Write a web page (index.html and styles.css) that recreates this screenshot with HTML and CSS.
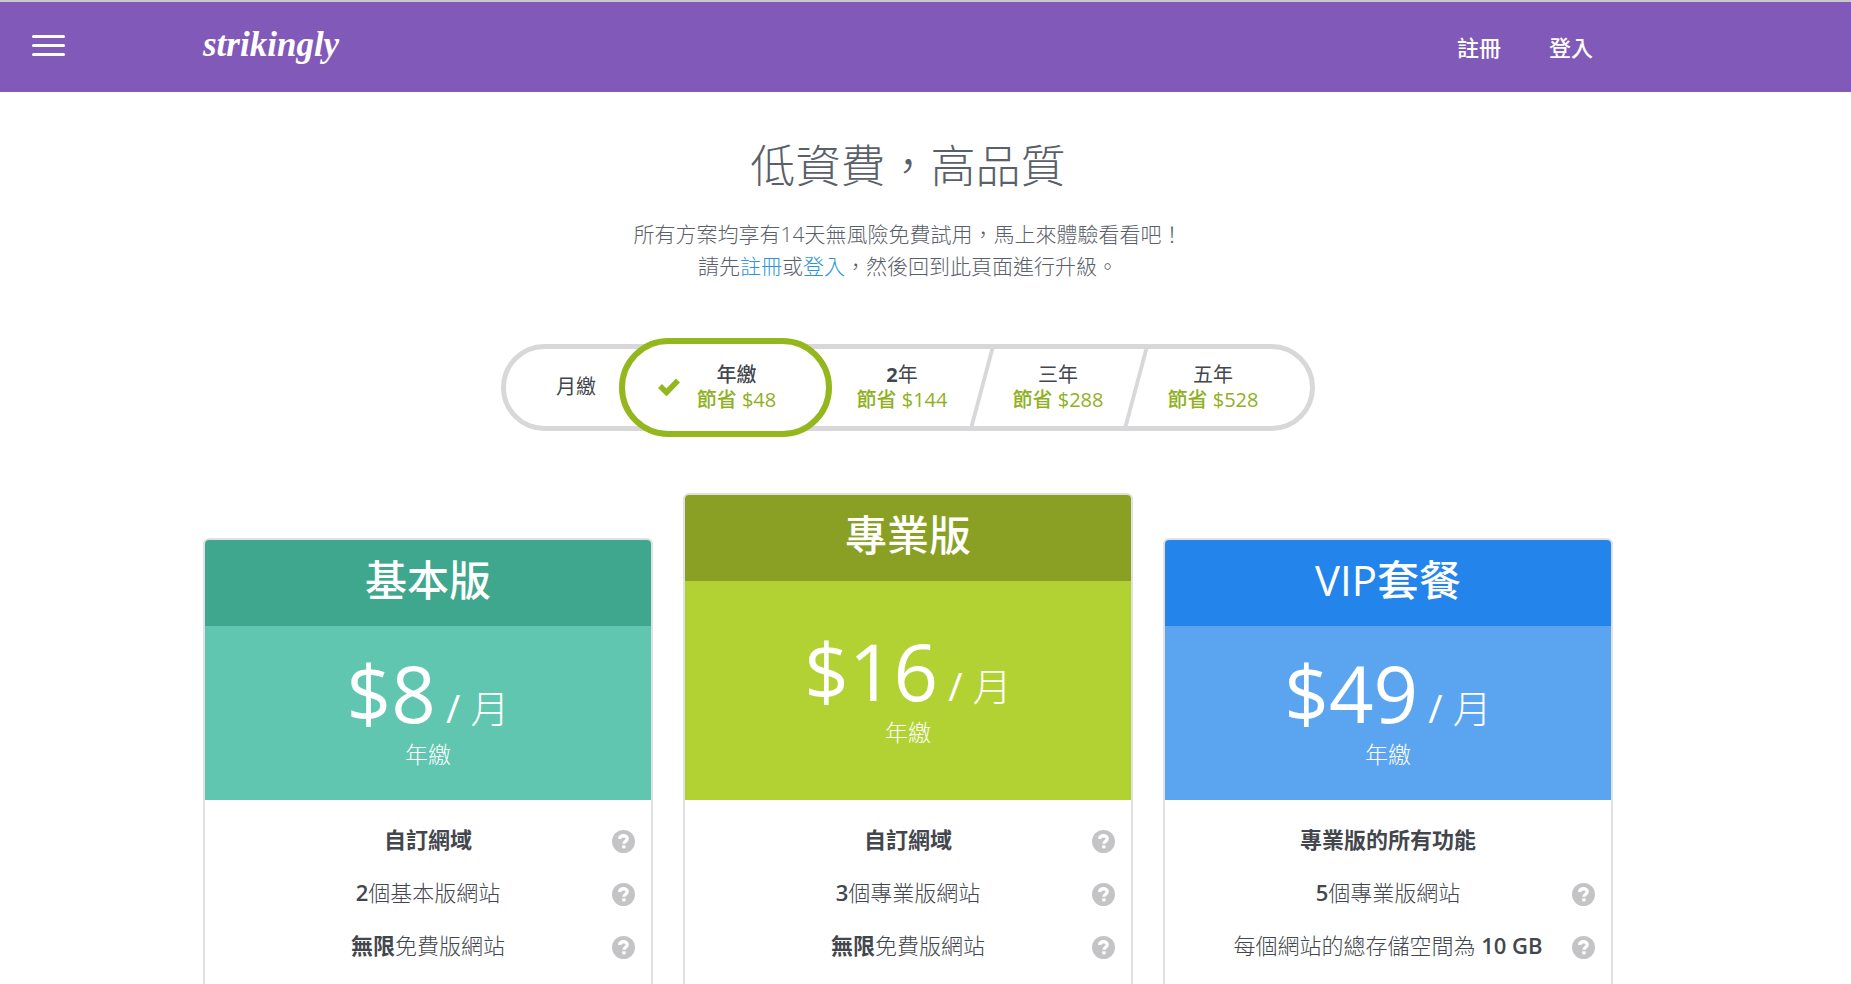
FILE: index.html
```
<!DOCTYPE html>
<html lang="zh-Hant">
<head>
    <meta charset="UTF-8">
    <meta name="viewport" content="width=device-width, initial-scale=1.0">
    <title>Strikingly - 方案與價格</title>
    <link rel="stylesheet" href="styles.css">
</head>
<body>
    <svg class="sprite" aria-hidden="true">
        <symbol id="help" viewBox="0 0 24 24">
            <circle cx="12" cy="12" r="12" fill="#c4c4c6"/>
            <path d="M7.800 9.400C8.200 7.200 9.700 6 12 6c2.200 0 3.900 1.300 3.900 3.200 0 2.600-3.500 2.500-3.500 5.100" fill="none" stroke="#fff" stroke-width="3.400"/>
            <rect x="10.700" y="16" width="3.400" height="3.200" fill="#fff"/>
        </symbol>
    </svg>

    <header class="header">
        <button class="menu-btn" aria-label="選單"><span></span><span></span><span></span></button>
        <div class="container header-inner">
            <a class="logo" href="#">strikingly</a>
            <nav class="nav">
                <a href="#">註冊</a>
                <a href="#">登入</a>
            </nav>
        </div>
    </header>

    <main class="main">
        <div class="intro">
            <h1>低資費，高品質</h1>
            <p>所有方案均享有14天無風險免費試用，馬上來體驗看看吧！<br>
            請先<a href="#">註冊</a>或<a href="#">登入</a>，然後回到此頁面進行升級。</p>
        </div>

        <div class="periods">
            <label class="period period-month">
                <input type="radio" name="period">
                <span class="period-name">月繳</span>
            </label>
            <label class="period period-year">
                <input type="radio" name="period" checked>
                <svg class="check" viewBox="0 0 24 19"><path d="M3 9l6.500 6.500L21 3.500" fill="none" stroke="#95b71e" stroke-width="5.500"/></svg>
                <span class="period-text">
                    <span class="period-name">年繳</span>
                    <span class="period-save">節省 $48</span>
                </span>
            </label>
            <label class="period period-two">
                <input type="radio" name="period">
                <span class="period-text">
                    <span class="period-name"><b>2</b>年</span>
                    <span class="period-save">節省 $144</span>
                </span>
            </label>
            <label class="period period-three">
                <input type="radio" name="period">
                <span class="period-text">
                    <span class="period-name">三年</span>
                    <span class="period-save">節省 $288</span>
                </span>
            </label>
            <label class="period period-five">
                <input type="radio" name="period">
                <span class="period-text">
                    <span class="period-name">五年</span>
                    <span class="period-save">節省 $528</span>
                </span>
            </label>
        </div>

        <div class="container plans">
            <section class="plan plan-basic">
                <h2>基本版</h2>
                <div class="plan-price">
                    <div class="price">$8<small> / <span>月</span></small></div>
                    <div class="billed">年繳</div>
                </div>
                <ul class="features">
                    <li><strong>自訂網域</strong><button class="help" aria-label="說明"><svg><use href="#help"/></svg></button></li>
                    <li><span><strong>2</strong>個基本版網站</span><button class="help" aria-label="說明"><svg><use href="#help"/></svg></button></li>
                    <li><span><strong>無限</strong>免費版網站</span><button class="help" aria-label="說明"><svg><use href="#help"/></svg></button></li>
                </ul>
            </section>

            <section class="plan plan-pro">
                <h2>專業版</h2>
                <div class="plan-price">
                    <div class="price">$16<small> / <span>月</span></small></div>
                    <div class="billed">年繳</div>
                </div>
                <ul class="features">
                    <li><strong>自訂網域</strong><button class="help" aria-label="說明"><svg><use href="#help"/></svg></button></li>
                    <li><span><strong>3</strong>個專業版網站</span><button class="help" aria-label="說明"><svg><use href="#help"/></svg></button></li>
                    <li><span><strong>無限</strong>免費版網站</span><button class="help" aria-label="說明"><svg><use href="#help"/></svg></button></li>
                </ul>
            </section>

            <section class="plan plan-vip">
                <h2>VIP套餐</h2>
                <div class="plan-price">
                    <div class="price">$49<small> / <span>月</span></small></div>
                    <div class="billed">年繳</div>
                </div>
                <ul class="features">
                    <li><strong>專業版的所有功能</strong></li>
                    <li><span><strong>5</strong>個專業版網站</span><button class="help" aria-label="說明"><svg><use href="#help"/></svg></button></li>
                    <li><span>每個網站的總存儲空間為 <strong>10 GB</strong></span><button class="help" aria-label="說明"><svg><use href="#help"/></svg></button></li>
                </ul>
            </section>
        </div>
    </main>
</body>
</html>
```

FILE: styles.css
```
* {
    box-sizing: border-box;
}

body {
    margin: 0;
    min-height: 100vh;
    display: flex;
    flex-direction: column;
    font-family: "Open Sans", "Noto Sans CJK TC", sans-serif;
    color: #43474d;
    background: white;
}

a {
    color: #2b95dc;
    text-decoration: none;
}

button {
    padding: 0;
    border: none;
    background: none;
    cursor: pointer;
}

.sprite {
    position: absolute;
    width: 0;
    height: 0;
}

.container {
    width: 100%;
    max-width: 1410px;
    margin: 0 auto;
}

/* header */
.header {
    position: relative;
    border-top: 2px solid #c9c9c9;
    background: #8159b9;
    padding-right: 35px;
}

.header-inner {
    display: flex;
    align-items: center;
    justify-content: space-between;
    height: 90px;
    padding-right: 20px;
}

.menu-btn {
    position: absolute;
    left: 32px;
    top: 33px;
    display: flex;
    flex-direction: column;
    gap: 6px;
    width: 33px;
}

.menu-btn span {
    height: 3px;
    border-radius: 2px;
    background: white;
}

.logo {
    padding-bottom: 4px;
    font: italic bold 35px/40px "Liberation Serif", serif;
    color: white;
}

.nav {
    display: flex;
    gap: 48px;
    padding-bottom: 2px;
}

.nav a {
    font-size: 22px;
    font-weight: 500;
    color: white;
}

/* intro */
.main {
    flex: 1;
    display: flex;
    flex-direction: column;
    align-items: center;
    padding-right: 35px;
}

.intro {
    text-align: center;
    color: #5a6069;
}

.intro h1 {
    margin: 42px 0 20px;
    font-size: 45px;
    line-height: 64px;
    font-weight: 200;
}

.intro p {
    margin: 0;
    font-size: 21px;
    line-height: 32px;
    font-weight: 300;
}

/* billing period switch */
.periods {
    display: flex;
    height: 87px;
    margin-top: 62px;
    border: 5px solid #d8d8da;
    border-radius: 44px;
}

.period {
    position: relative;
    display: flex;
    align-items: center;
    justify-content: center;
    padding-bottom: 2px;
    font-size: 20px;
    line-height: 25px;
    cursor: pointer;
}

.period input {
    position: absolute;
    opacity: 0;
}

.period-text {
    display: flex;
    flex-direction: column;
    align-items: center;
}

.period-save {
    color: #8fb021;
    font-size: 20px;
    font-weight: 500;
}

.period-month {
    width: 113px;
    padding-left: 27px;
}

.period-year {
    width: 213px;
    margin: -11px 0;
    gap: 16px;
    padding-right: 18px;
    border: 6px solid #95b71e;
    border-radius: 50px;
    background: white;
}

.period-year .period-name {
    font-weight: 500;
}

.check {
    width: 24px;
    height: 19px;
}

.period-two {
    width: 150px;
    padding-right: 10px;
}

.period-three {
    width: 154px;
    padding-right: 2px;
}

.period-five {
    width: 174px;
    padding-right: 20px;
}

.period-three::before,
.period-five::before {
    content: "";
    position: absolute;
    left: -2px;
    top: 0;
    width: 4px;
    height: 100%;
    background: #d8d8da;
    transform: skewX(-15deg);
}

/* plans */
.plans {
    flex: 1;
    display: grid;
    grid-template-columns: repeat(3, 1fr);
    gap: 30px;
    margin-top: 62px;
}

.plan {
    margin-top: 45px;
    border: 2px solid #dfe1e2;
    border-bottom: none;
    border-radius: 6px 6px 0 0;
    overflow: hidden;
    text-align: center;
}

.plan h2 {
    margin: 0;
    padding-bottom: 6px;
    font-size: 42px;
    line-height: 80px;
    font-weight: 500;
    color: white;
}

.plan-price {
    display: flex;
    flex-direction: column;
    justify-content: center;
    height: 174px;
    padding-bottom: 8px;
    color: white;
}

.price {
    font-size: 78px;
    line-height: 90px;
    height: 90px;
}

.price small {
    font-size: 39px;
    line-height: 39px;
}

.price small span {
    font-weight: 300;
}

.billed {
    font-size: 23px;
    line-height: 32px;
    font-weight: 300;
}

.plan-basic h2 { background: #3ea78d; }
.plan-basic .plan-price { background: #60c6b0; }
.plan-pro h2 { background: #8aa024; }
.plan-pro .plan-price { background: #b2d234; }
.plan-vip h2 { background: #2385ec; }
.plan-vip .plan-price { background: #5ba5f0; }

/* the middle plan stands taller than its neighbours */
.plan-pro {
    margin-top: 0;
}

.plan-pro .plan-price {
    height: 219px;
}

.features {
    margin: 0;
    padding: 13px 0 0;
    list-style: none;
    font-size: 22px;
    line-height: 53px;
    font-weight: 300;
}

.features li {
    position: relative;
}

.features strong {
    font-weight: 600;
}

.help {
    position: absolute;
    right: 16px;
    top: 17px;
    width: 23px;
    height: 23px;
}

.help svg {
    display: block;
    width: 23px;
    height: 23px;
}
```
